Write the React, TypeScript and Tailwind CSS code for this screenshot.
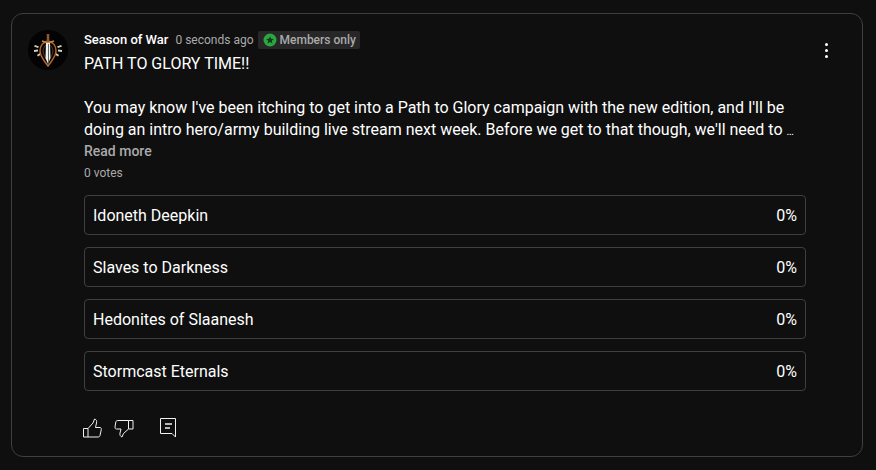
import React from "react";

const pollOptions = [
  "Idoneth Deepkin",
  "Slaves to Darkness",
  "Hedonites of Slaanesh",
  "Stormcast Eternals",
];

function Avatar() {
  return (
    <div className="flex h-10 w-10 shrink-0 items-center justify-center rounded-full bg-[#030303]">
      <svg width="40" height="40" viewBox="0 0 40 40" fill="none">
        {/* wings */}
        <path d="M7 15l4 1.500-1 1.500-4-1.500zM6 20l4-.5 0 2-4 .5zM9 25l3-2 1 1.500-3 2zM33 15l-4 1.500 1 1.500 4-1.500zM34 20l-4-.5 0 2 4 .5zM31 25l-3-2-1 1.500 3 2z" fill="#d8ccb8" />
        {/* shield */}
        <path d="M20 11c-5 1-8 5-8 10 0 5 4 10 8 15 4-5 8-10 8-15 0-5-3-9-8-10z" stroke="#b8692c" strokeWidth="1.500" />
        <path d="M20 14c-3 1-5 4-5 7 0 4 3 7 5 11 2-4 5-7 5-11 0-3-2-6-5-7z" stroke="#5e3518" strokeWidth="1" />
        {/* sword */}
        <path d="M20 4v8" stroke="#8f5a30" strokeWidth="2.500" />
        <path d="M14 11l6 2 6-2" stroke="#c98240" strokeWidth="1.800" />
        <path d="M18 13h4l.5 15-2.500 6-2.500-6z" fill="#eef0ec" />
        <path d="M20.500 14v19" stroke="#5c6a66" strokeWidth="1" />
      </svg>
    </div>
  );
}

function MemberBadge() {
  return (
    <span className="ml-[4px] flex h-[18px] items-center gap-[3px] rounded-[2px] bg-[#272727] pl-[5px] pr-[4px] text-[12px] font-medium text-[#aaaaaa]">
      <svg width="14" height="14" viewBox="0 0 14 14">
        <circle cx="7" cy="7" r="6.500" fill="#2ba640" />
        <path d="M7 3.200l1.100 2.500 2.700.3-2 1.800.6 2.700L7 9.100l-2.400 1.400.6-2.700-2-1.800 2.700-.3z" fill="#0f3d18" />
      </svg>
      Members only
    </span>
  );
}

export default function App() {
  return (
    <div className="h-[470px] w-[876px] overflow-hidden bg-[#0f0f0f] pl-[11px] pt-[13px] font-['Roboto',sans-serif] text-white">
      <div className="flex h-[444px] w-[852px] rounded-[12px] border border-[#3f3f3f] pl-[16px] pr-[16px] pt-[16px]">
        <Avatar />

        <div className="ml-[16px] flex w-[722px] flex-col">
          {/* Header */}
          <div className="flex h-[20px] items-center">
            <span className="text-[13px] font-medium leading-[18px]">Season of War</span>
            <span className="ml-[7px] text-[12px] leading-[18px] text-[#aaaaaa]">0 seconds ago</span>
            <MemberBadge />
          </div>

          {/* Post text */}
          <p className="mt-[3px] text-[16px] leading-[22px]">
            PATH TO GLORY TIME!!
            <br />
            <br />
            You may know I've been itching to get into a Path to Glory campaign with the new edition, and I'll be
            <br />
            doing an intro hero/army building live stream next week. Before we get to that though, we'll need to{" "}
            <span className="text-[11px] leading-none">…</span>
          </p>
          <div className="text-[14px] font-medium leading-[20px] text-[#aaaaaa]">Read more</div>
          <div className="mt-[3px] text-[12px] leading-[18px] text-[#aaaaaa]">0 votes</div>

          {/* Poll */}
          <div className="mt-[13px] flex flex-col gap-[12px]">
            {pollOptions.map((option) => (
              <div
                key={option}
                className="flex h-[40px] items-center justify-between rounded-[4px] border border-[#3f3f3f] px-[8px] pt-[2px] text-[16px]"
              >
                <span>{option}</span>
                <span>0%</span>
              </div>
            ))}
          </div>

          {/* Actions */}
          <div className="mt-[25px] flex h-[24px] items-center text-[#f1f1f1]">
            <svg className="-ml-[4px]" width="24" height="24" viewBox="0 0 24 24" fill="none" stroke="currentColor" strokeWidth="1">
              <path d="M3.500 12.500H8V21H3.500zM8 12.500l5-5.500 1.500-4c2 .5 2.500 2 2 4l-1 4.500H20c1 0 1.500 1 1.300 2L20 19.500c-.2 1-1 1.500-2 1.500H8" />
            </svg>
            <svg className="ml-[8px]" width="24" height="24" viewBox="0 0 24 24" fill="none" stroke="currentColor" strokeWidth="1">
              <path d="M16.500 4.500H21V13h-4.500zM16.500 4.500H6c-1 0-2 .5-2.200 1.500L3 11c0 1.500.5 2 1.500 2H9l-1 4c-.5 2 .5 3.500 2 4l1.500-3.500 5-4.500" />
            </svg>
            <svg className="ml-[20px]" width="24" height="24" viewBox="0 0 24 24" fill="none" stroke="currentColor" strokeWidth="1">
              <path d="M4.500 2.500h15V21L16 17.500H4.500z" />
              <path d="M9 8h7M9 12h5" strokeWidth="1.500" />
            </svg>
          </div>
        </div>

        {/* Menu */}
        <div className="flex h-[40px] w-[40px] shrink-0 flex-col items-center justify-center gap-[3px]">
          <span className="h-[3px] w-[3px] rounded-full bg-white" />
          <span className="h-[3px] w-[3px] rounded-full bg-white" />
          <span className="h-[3px] w-[3px] rounded-full bg-white" />
        </div>
      </div>
    </div>
  );
}
